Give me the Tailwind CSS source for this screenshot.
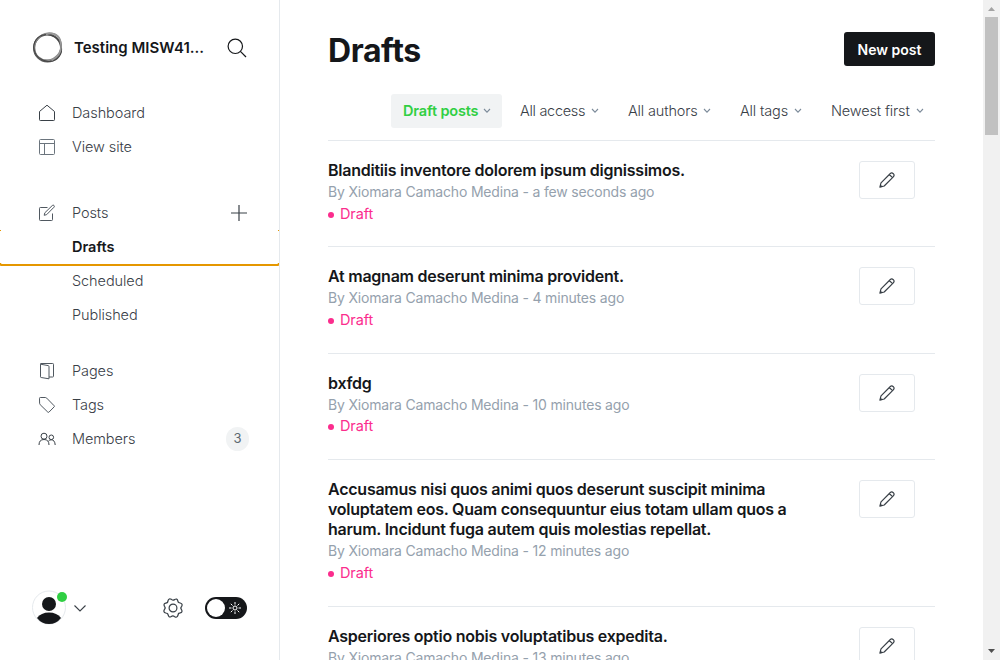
<!DOCTYPE html>
<html lang="en">
<head>
<meta charset="utf-8">
<title>Drafts</title>
<script src="https://cdn.jsdelivr.net/npm/@tailwindcss/browser@4"></script>
</head>
<body class="flex h-[660px] w-[1000px] overflow-hidden bg-white font-[Inter,sans-serif] text-[#394047]">
<svg class="hidden">
  <symbol id="chev" viewBox="0 0 8 6"><path d="M1 1l3 3.2L7 1" fill="none" stroke="#7c8b9a" stroke-width="1.1"/></symbol>
  <symbol id="pencil" viewBox="0 0 16 16"><g fill="none" stroke="#394047" stroke-width="1.200" stroke-linejoin="round"><path d="M14.300 1.700a2.300 2.300 0 0 0-3.200 0L2 10.800.9 15.100l4.300-1.100L14.300 4.900a2.300 2.300 0 0 0 0-3.200zM10.300 2.500l3.200 3.200M.9 15.100l.5-1.900 1.400 1.400z"/></g></symbol>
</svg>

<aside class="flex w-[280px] shrink-0 flex-col border-r border-[#e5e9ed] text-[14.5px]">
  <header class="flex h-[96px] items-center pl-[32px]">
    <svg class="size-8" viewBox="0 0 32 32" fill="none">
      <circle cx="15.500" cy="16" r="13.500" stroke="#555" stroke-width="2"/>
      <ellipse cx="17" cy="15" rx="14" ry="12.800" stroke="#8a8a8a" stroke-width="1.500" transform="rotate(-48 16 16)"/>
      <ellipse cx="15.800" cy="16.200" rx="14.300" ry="13" stroke="#444" stroke-width="1" transform="rotate(35 16 16)"/>
      <path d="M14 2.500c8-3 14 1 14.500 8 2 8-1 14-9 18" stroke="#999" stroke-width="1.500"/>
    </svg>
    <span class="ml-[10px] w-[132px] whitespace-nowrap text-[15px] font-semibold text-[#15171a]">Testing MISW41...</span>
    <svg class="ml-[21px] size-5" viewBox="0 0 20 20" fill="none" stroke="#15171a" stroke-width="1.2"><circle cx="8.300" cy="8.300" r="7.200"/><path d="M13.400 13.400l5.600 5.600"/></svg>
  </header>

  <nav class="font-[350] tracking-[-0.08px]">
    <a class="flex h-[34px] items-center pl-[38px]">
      <svg class="size-[18px]" viewBox="0 0 18 18" fill="none" stroke="#394047" stroke-linejoin="round"><path d="M1.500 7.500L9 1.200l7.500 6.300v8.200q0 .8-.8.8H2.300q-.8 0-.8-.8z"/></svg>
      <span class="ml-4">Dashboard</span>
    </a>
    <a class="flex h-[34px] items-center pl-[38px]">
      <svg class="size-[18px]" viewBox="0 0 18 18" fill="none" stroke="#6b747d"><rect x="1.500" y="1.500" width="15" height="15" rx="1"/><path d="M1.500 5.500h15M6.500 5.500v11"/></svg>
      <span class="ml-4">View site</span>
    </a>
    <a class="mt-8 flex h-[34px] items-center pl-[38px]">
      <svg class="size-[18px]" viewBox="0 0 18 18" fill="none" stroke="#505860" stroke-linejoin="round"><path d="M9.500 3.500H2.300q-.8 0-.8.8v11.400q0 .8.8.8h11.400q.8 0 .8-.8V9.500M6.800 8.800l7.500-7.300q.9-.8 1.700 0t0 1.700L8.700 10.600l-2.500.7z"/></svg>
      <span class="ml-4">Posts</span>
      <svg class="ml-auto mr-[32px] size-4" viewBox="0 0 16 16" stroke="#394047"><path d="M0 8h16M8 0v16" stroke-width="1.200"/></svg>
    </a>
    <a class="relative flex h-[34px] items-center pl-[72px] font-semibold tracking-normal text-[#15171a]">Drafts
      <svg class="absolute top-0 left-0 h-9 w-[279px]" viewBox="0 0 279 36" fill="none" stroke="#e59700"><path d="M0 .5h1M278 .5h1"/><path d="M0 33q0 2 2 2h275q2 0 2-2" stroke-width="2"/></svg>
    </a>
    <a class="flex h-[34px] items-center pl-[72px]">Scheduled</a>
    <a class="flex h-[34px] items-center pl-[72px]">Published</a>
    <a class="mt-[22px] flex h-[34px] items-center pl-[38px]">
      <svg class="size-[18px]" viewBox="0 0 18 18" fill="none" stroke="#505860" stroke-linejoin="round"><path d="M2.500 2.200v12.600q0 .7.700.7l7.800 1.300V4.500q0-.8-.8-.9zl.2-.7H14.700q.8 0 .8.800v12q0 .7-.8.700H11"/></svg>
      <span class="ml-4">Pages</span>
    </a>
    <a class="flex h-[34px] items-center pl-[38px]">
      <svg class="size-[18px]" viewBox="0 0 18 18" fill="none" stroke="#505860" stroke-linejoin="round"><path d="M1.500 2.300q0-.8.8-.8h5q.8 0 1.400.6l7.500 7.700q.5.500 0 1l-5.200 5.300q-.6.500-1.200 0L2.200 8.700q-.6-.6-.6-1.400z"/></svg>
      <span class="ml-4">Tags</span>
    </a>
    <a class="flex h-[34px] items-center pl-[38px]">
      <svg class="size-[18px]" viewBox="0 0 18 18" fill="none" stroke="#394047"><circle cx="6" cy="6.200" r="3"/><circle cx="13.300" cy="7.300" r="2.300"/><path d="M1 15q0-5.500 5-5.500t5 5.500M10.500 11q1-1.200 2.800-1.200 3.500 0 3.900 5.200"/></svg>
      <span class="ml-4">Members</span>
      <span class="ml-auto mr-[30px] flex h-6 w-[23px] items-center justify-center rounded-full bg-[#f1f3f4] text-[13px] font-normal text-[#5d6872]">3</span>
    </a>
  </nav>

  <footer class="mt-auto flex h-[104px] items-center pl-[32px]">
    <svg class="size-[36px]" viewBox="0 0 36 36"><circle cx="17" cy="17.500" r="16.500" fill="#fff" stroke="#e5e9ed"/><circle cx="17" cy="14" r="7" fill="#15171a"/><path d="M5 28q4-5.500 12-5.500T29 28q-4.500 6-12 6T5 28z" fill="#15171a"/><circle cx="30" cy="7" r="5" fill="#30cf43"/></svg>
    <svg class="ml-[6px] size-3" viewBox="0 0 12 12" fill="none" stroke="#394047" stroke-width="1.100"><path d="M.5 3.500L6 9l5.500-5.500"/></svg>
    <svg class="ml-[76px] size-[22px]" viewBox="0 0 22 22" fill="none" stroke="#394047" stroke-width="1.200" stroke-linejoin="round"><circle cx="11" cy="11" r="3.900"/><path transform="rotate(22.500 11 11)" d="M9.300 2.500Q11 .2 12.700 2.500C13.400 4 14.200 4.200 15.800 3.600Q18.700 3.300 18.400 6.200C17.800 7.800 18 8.600 19.500 9.300Q21.800 11 19.500 12.700C18 13.400 17.800 14.200 18.400 15.800Q18.700 18.700 15.800 18.400C14.200 17.800 13.400 18 12.700 19.500Q11 21.800 9.300 19.500C8.600 18 7.800 17.800 6.200 18.400Q3.300 18.700 3.600 15.800C4.200 14.200 4 13.400 2.500 12.700Q.2 11 2.500 9.300C4 8.600 4.200 7.800 3.600 6.200Q3.300 3.300 6.200 3.600C7.800 4.200 8.600 4 9.300 2.500z"/></svg>
    <span class="ml-[21px] flex h-[22px] w-[42px] items-center rounded-full bg-[#15171a] px-[2px]">
      <span class="size-[18px] rounded-full bg-white"></span>
      <svg class="ml-1 size-3" viewBox="0 0 12 12" fill="none" stroke="#fff"><circle cx="6" cy="6" r="2"/><path d="M6 0v2.500M6 9.500V12M0 6h2.500M9.500 6H12M1.800 1.800l1.700 1.700M8.500 8.500l1.700 1.700M10.200 1.800L8.500 3.500M3.500 8.500l-1.700 1.700"/></svg>
    </span>
  </footer>
</aside>

<main class="h-[660px] w-[703px] shrink-0 overflow-hidden pr-[48px] pl-[48px] text-[14.5px]">
  <header class="flex h-[94px] items-center justify-between pt-[4px]">
    <h1 class="pt-[3px] text-[32px] font-bold tracking-[-0.4px] text-[#15171a]">Drafts</h1>
    <button class="h-[34px] w-[91px] rounded-[3px] bg-[#15171a] text-[14px] font-semibold text-white">New post</button>
  </header>
  <div class="flex h-[34px] justify-end font-[350] tracking-[-0.15px] whitespace-nowrap">
    <div class="flex w-[111px] items-center rounded-[3px] bg-[#f1f3f4] pl-3 font-semibold text-[#30cf43]"><span class="w-[80px]">Draft posts</span><svg class="h-[6px] w-2"><use href="#chev"/></svg></div>
    <div class="ml-[18px] flex w-[108px] items-center"><span class="w-[71px] tracking-[-0.3px]">All access</span><svg class="h-[6px] w-2"><use href="#chev"/></svg></div>
    <div class="flex w-[112px] items-center"><span class="w-[75px]">All authors</span><svg class="h-[6px] w-2"><use href="#chev"/></svg></div>
    <div class="flex w-[91px] items-center"><span class="w-[54px]">All tags</span><svg class="h-[6px] w-2"><use href="#chev"/></svg></div>
    <div class="flex w-[104px] items-center"><span class="w-[85px]">Newest first</span><svg class="h-[6px] w-2"><use href="#chev"/></svg></div>
  </div>

  <ul class="mt-3">
    <li class="flex h-[106px] justify-between border-t border-[#e5e9ed] pt-5 pr-5">
      <div class="-mt-px whitespace-nowrap">
        <h3 class="mb-px text-[16px] leading-5 font-semibold tracking-[-0.24px] text-[#15171a]">Blanditiis inventore dolorem ipsum dignissimos.</h3>
        <p class="text-[14px] leading-[22px] tracking-[-0.18px] text-[#95a1ad]">By Xiomara Camacho Medina - a few seconds ago</p>
        <p class="flex items-center gap-[6px] leading-[22px] tracking-[-0.1px] text-[#fb2d8d]"><i class="mt-[2px] size-[6px] rounded-full bg-[#fb2d8d]"></i>Draft</p>
      </div>
      <button class="flex h-[38px] w-[56px] items-center justify-center rounded-[3px] border border-[#e5e9ed]"><svg class="size-4"><use href="#pencil"/></svg></button>
    </li>
    <li class="flex h-[107px] justify-between border-t border-[#e5e9ed] pt-5 pr-5">
      <div class="-mt-px whitespace-nowrap">
        <h3 class="mb-px text-[16px] leading-5 font-semibold tracking-[-0.24px] text-[#15171a]">At magnam deserunt minima provident.</h3>
        <p class="text-[14px] leading-[22px] tracking-[-0.18px] text-[#95a1ad]">By Xiomara Camacho Medina - 4 minutes ago</p>
        <p class="flex items-center gap-[6px] leading-[22px] tracking-[-0.1px] text-[#fb2d8d]"><i class="mt-[2px] size-[6px] rounded-full bg-[#fb2d8d]"></i>Draft</p>
      </div>
      <button class="flex h-[38px] w-[56px] items-center justify-center rounded-[3px] border border-[#e5e9ed]"><svg class="size-4"><use href="#pencil"/></svg></button>
    </li>
    <li class="flex h-[106px] justify-between border-t border-[#e5e9ed] pt-5 pr-5">
      <div class="-mt-px whitespace-nowrap">
        <h3 class="mb-px text-[16px] leading-5 font-semibold tracking-[-0.24px] text-[#15171a]">bxfdg</h3>
        <p class="text-[14px] leading-[22px] tracking-[-0.18px] text-[#95a1ad]">By Xiomara Camacho Medina - 10 minutes ago</p>
        <p class="-mt-px flex items-center gap-[6px] leading-[22px] tracking-[-0.1px] text-[#fb2d8d]"><i class="mt-[2px] size-[6px] rounded-full bg-[#fb2d8d]"></i>Draft</p>
      </div>
      <button class="flex h-[38px] w-[56px] items-center justify-center rounded-[3px] border border-[#e5e9ed]"><svg class="size-4"><use href="#pencil"/></svg></button>
    </li>
    <li class="flex h-[147px] justify-between border-t border-[#e5e9ed] pt-5 pr-5">
      <div class="-mt-px whitespace-nowrap">
        <h3 class="mb-px text-[16px] leading-5 font-semibold tracking-[-0.24px] text-[#15171a]">Accusamus nisi quos animi quos deserunt suscipit minima<br>voluptatem eos. Quam consequuntur eius totam ullam quos a<br>harum. Incidunt fuga autem quis molestias repellat.</h3>
        <p class="text-[14px] leading-[22px] tracking-[-0.18px] text-[#95a1ad]">By Xiomara Camacho Medina - 12 minutes ago</p>
        <p class="flex items-center gap-[6px] leading-[22px] tracking-[-0.1px] text-[#fb2d8d]"><i class="mt-[2px] size-[6px] rounded-full bg-[#fb2d8d]"></i>Draft</p>
      </div>
      <button class="flex h-[38px] w-[56px] items-center justify-center rounded-[3px] border border-[#e5e9ed]"><svg class="size-4"><use href="#pencil"/></svg></button>
    </li>
    <li class="flex h-[106px] justify-between border-t border-[#e5e9ed] pt-5 pr-5">
      <div class="-mt-px whitespace-nowrap">
        <h3 class="mb-px text-[16px] leading-5 font-semibold tracking-[-0.24px] text-[#15171a]">Asperiores optio nobis voluptatibus expedita.</h3>
        <p class="text-[14px] leading-[22px] tracking-[-0.18px] text-[#95a1ad]">By Xiomara Camacho Medina - 13 minutes ago</p>
      </div>
      <button class="flex h-[38px] w-[56px] items-center justify-center rounded-[3px] border border-[#e5e9ed]"><svg class="size-4"><use href="#pencil"/></svg></button>
    </li>
  </ul>
</main>

<div class="flex w-[17px] shrink-0 flex-col items-center bg-[#f1f1f1]">
  <svg class="h-[17px] w-[17px] shrink-0" viewBox="0 0 17 17"><path d="M5 11h7L8.500 7z" fill="#a3a3a3"/></svg>
  <div class="h-[118px] w-[13px] bg-[#c1c1c1]"></div>
  <svg class="mt-auto h-[17px] w-[17px] shrink-0" viewBox="0 0 17 17"><path d="M5 6h7l-3.500 4z" fill="#505050"/></svg>
</div>
</body>
</html>
